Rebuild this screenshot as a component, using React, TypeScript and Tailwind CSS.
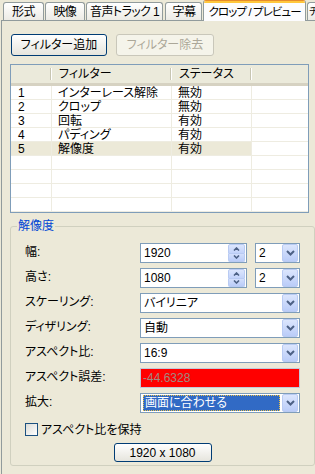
import React from 'react';

interface FilterRow {
  no: string;
  name: string;
  status: string;
}

const FILTERS: FilterRow[] = [
  { no: '1', name: 'インターレース解除', status: '無効' },
  { no: '2', name: 'クロップ', status: '無効' },
  { no: '3', name: '回転', status: '有効' },
  { no: '4', name: 'パディング', status: '有効' },
  { no: '5', name: '解像度', status: '有効' },
];

const TABS = [
  { label: '形式', w: 'w-[41px]' },
  { label: '映像', w: 'w-[40px]' },
  { label: '音声トラック 1', w: 'w-[78px]' },
  { label: '字幕', w: 'w-[37px]' },
];

function ChevronDown() {
  return (
    <svg width="9" height="6" viewBox="0 0 9 6">
      <path d="M1 1 L4.5 4.5 L8 1" stroke="#4D6185" strokeWidth="2" fill="none" />
    </svg>
  );
}

function SpinArrow({ up }: { up?: boolean }) {
  return (
    <svg width="7" height="4" viewBox="0 0 7 4">
      <path
        d={up ? 'M1 3.5 L3.5 1 L6 3.5' : 'M1 0.5 L3.5 3 L6 0.5'}
        stroke="#4D6185"
        strokeWidth="1.6"
        fill="none"
      />
    </svg>
  );
}

function ComboButton() {
  return (
    <div className="flex h-[18px] w-[16px] shrink-0 items-center justify-center rounded-[2px] border border-[#B9CBF3] bg-linear-to-b from-[#DCE6FD] to-[#BACCF8]">
      <ChevronDown />
    </div>
  );
}

function Combo({ value, width, focused }: { value: string; width: string; focused?: boolean }) {
  return (
    <div className={`flex h-[20px] ${width} items-center border border-[#7F9DB9] bg-white pr-[1px]`}>
      {focused ? (
        <div className="ml-[2px] mr-[2px] flex h-[16px] flex-1 items-center border border-dotted border-[#E8C048] bg-[#316AC5] pl-[1px] text-white">
          {value}
        </div>
      ) : (
        <div className="flex-1 pl-[3px]">{value}</div>
      )}
      <ComboButton />
    </div>
  );
}

function SpinBox({ value }: { value: string }) {
  return (
    <div className="flex h-[20px] w-[107px] items-center border border-[#7F9DB9] bg-white pr-[1px]">
      <div className="flex-1 pl-[3px]">{value}</div>
      <div className="flex h-[18px] w-[17px] flex-col">
        <div className="flex flex-1 items-center justify-center rounded-t-[2px] border border-[#B9CBF3] bg-linear-to-b from-[#DCE6FD] to-[#C3D3FA]">
          <SpinArrow up />
        </div>
        <div className="flex flex-1 items-center justify-center rounded-b-[2px] border border-t-0 border-[#B9CBF3] bg-linear-to-b from-[#D3DFFC] to-[#BACCF8]">
          <SpinArrow />
        </div>
      </div>
    </div>
  );
}

function FormRow({ label, children }: { label: string; children: React.ReactNode }) {
  return (
    <div className="flex h-[20px] items-center">
      <div className="w-[115px] shrink-0 -translate-y-[1px]">{label}</div>
      {children}
    </div>
  );
}

export default function App() {
  return (
    <div className="h-[474px] w-[315px] overflow-hidden bg-[#ECE9D8] font-['Liberation_Sans','Noto_Sans_CJK_JP',sans-serif] text-[12px] leading-[14px] text-black [font-feature-settings:'palt']">
      {/* Tabs */}
      <div className="flex h-[20px] items-end pl-[3px]">
        {TABS.map((t, i) => (
          <div
            key={t.label}
            className={`flex h-[18px] ${t.w} ${i === 2 ? 'mr-[2px]' : 'mr-[1px]'} items-center justify-center whitespace-nowrap rounded-t-[3px] border border-b-0 border-[#919B9C] bg-linear-to-b from-white to-[#ECEBE5] tracking-[-0.6px]`}
          >
            {t.label}
          </div>
        ))}
        <div className="relative z-10 -mb-px flex h-[21px] w-[103px] flex-col overflow-hidden rounded-t-[3px] border border-b-0 border-[#919B9C] border-t-[#E68B2C] bg-[#FCFCFE]">
          <div className="h-[2px] bg-[#FFC73C]" />
          <div className="flex flex-1 items-center justify-center whitespace-nowrap text-[11.5px] tracking-[-0.9px]">
            クロップ / プレビュー
          </div>
        </div>
        <div className="ml-[1px] flex h-[18px] w-[8px] shrink-0 items-center overflow-hidden rounded-tl-[3px] border-l border-t border-[#919B9C] bg-linear-to-b from-white to-[#ECEBE5] pl-[1px] text-[10px]">
          チ
        </div>
      </div>

      {/* Panel */}
      <div className="ml-[1px] h-[454px] border-l border-t border-[#919B9C] pl-[8px] pt-[13px]">
        <div className="flex gap-[9px] pl-[1px]">
          <div className="flex h-[22px] w-[96px] items-center justify-center rounded-[3px] border border-[#003C74] bg-linear-to-b from-white to-[#E6E5DD]">
            フィルター追加
          </div>
          <div className="flex h-[22px] w-[98px] items-center justify-center rounded-[3px] border border-[#C9C7BA] bg-[#F5F4EA] text-[#ACA899]">
            フィルター除去
          </div>
        </div>

        {/* Filter list */}
        <div className="mt-[8px] h-[149px] w-[299px] border border-[#7F9DB9] bg-white">
          <div className="flex h-[21px] border-b-[3px] border-[#D6D2C2] bg-[#EBEADB]">
            <div className="flex w-[41px] items-center justify-end py-[3px]">
              <div className="h-full w-[2px] border-l border-[#C7C5B2] bg-white" />
            </div>
            <div className="flex w-[120px] items-center justify-between py-[3px]">
              <span className="pl-[7px]">フィルター</span>
              <div className="h-full w-[2px] border-l border-[#C7C5B2] bg-white" />
            </div>
            <div className="flex w-[80px] items-center justify-between py-[3px]">
              <span className="pl-[7px]">ステータス</span>
              <div className="h-full w-[2px] border-l border-[#C7C5B2] bg-white" />
            </div>
            <div className="flex-1" />
          </div>
          {Array.from({ length: 9 }).map((_, i) => {
            const row = FILTERS[i];
            const selected = i === 4;
            return (
              <div key={i} className="flex h-[14px] border-b border-[#EEECE1]">
                <div className={`w-[41px] border-r border-[#EEECE1] pl-[7px] ${selected ? 'bg-[#ECE9D8]' : ''}`}>
                  {row?.no}
                </div>
                <div className={`w-[120px] border-r border-[#EEECE1] pl-[6px] ${selected ? 'bg-[#ECE9D8]' : ''}`}>
                  {row?.name}
                </div>
                <div className={`w-[80px] border-r border-[#EEECE1] pl-[6px] ${selected ? 'bg-[#ECE9D8]' : ''}`}>
                  {row?.status}
                </div>
                <div className="flex-1" />
              </div>
            );
          })}
        </div>

        {/* Resolution group */}
        <fieldset className="mt-[6px] w-[299px] rounded-[3px] border border-[#D0D0BF] pb-[3px]">
          <legend className="ml-[6px] px-[1px] text-[#0046D5]">解像度</legend>
          <div className="flex flex-col px-[14px] pt-[10px]">
            <div className="flex flex-col gap-[5px]">
              <FormRow label="幅:">
                <SpinBox value="1920" />
                <div className="ml-[8px]">
                  <Combo value="2" width="w-[45px]" />
                </div>
              </FormRow>
              <FormRow label="高さ:">
                <SpinBox value="1080" />
                <div className="ml-[8px]">
                  <Combo value="2" width="w-[45px]" />
                </div>
              </FormRow>
              <FormRow label="スケーリング:">
                <Combo value="バイリニア" width="w-[160px]" />
              </FormRow>
              <FormRow label="ディザリング:">
                <Combo value="自動" width="w-[160px]" />
              </FormRow>
              <FormRow label="アスペクト比:">
                <Combo value="16:9" width="w-[160px]" />
              </FormRow>
              <FormRow label="アスペクト誤差:">
                <div className="flex h-[20px] w-[160px] items-center border border-[#C4C8D8] bg-[#FF0000] pl-[2px] text-[#A08880]">
                  -44.6328
                </div>
              </FormRow>
              <FormRow label="拡大:">
                <Combo value="画面に合わせる" width="w-[160px]" focused />
              </FormRow>
            </div>

            <div className="mt-[10px] flex h-[13px] items-center gap-[3px]">
              <div className="h-[13px] w-[13px] border border-[#1C5180] bg-linear-to-br from-[#DCDCD7] to-white" />
              <span>アスペクト比を保持</span>
            </div>

            <div className="mt-[7px] flex justify-center">
              <div className="flex h-[19px] w-[98px] items-center justify-center rounded-[3px] border border-[#003C74] bg-linear-to-b from-white to-[#E6E5DD]">
                1920 x 1080
              </div>
            </div>
          </div>
        </fieldset>
      </div>
    </div>
  );
}
